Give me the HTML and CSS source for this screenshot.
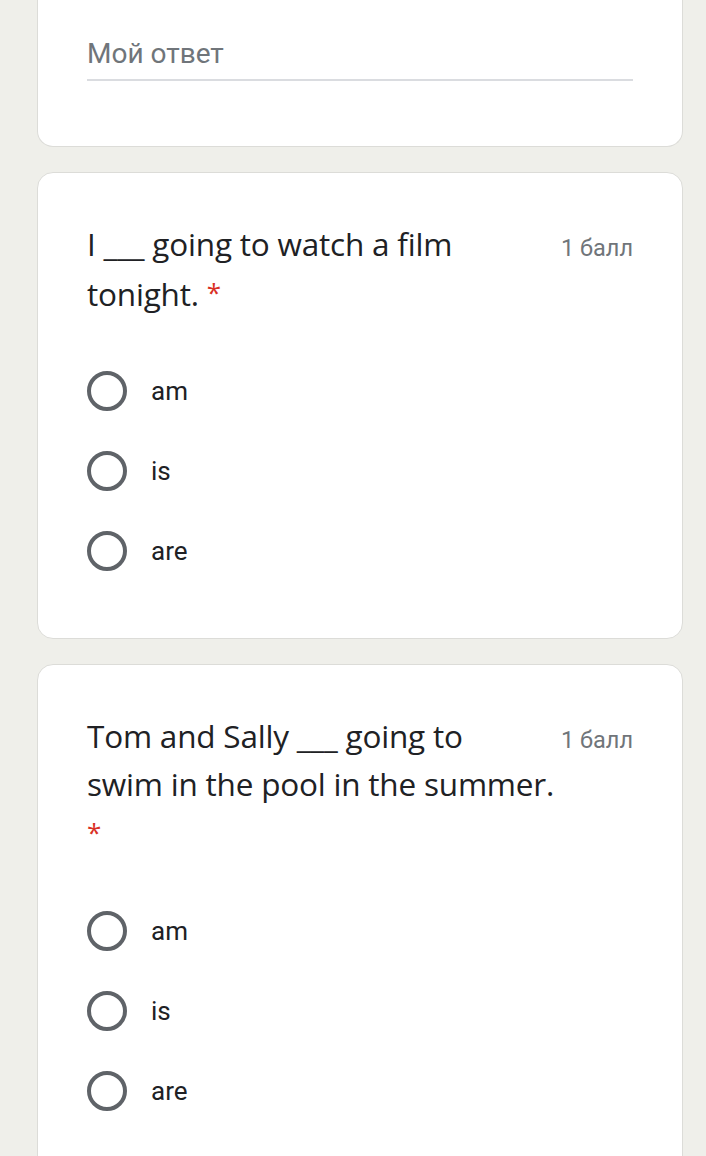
FILE: index.html
```html
<!DOCTYPE html>
<html lang="ru">
<head>
<meta charset="utf-8">
<title>Form</title>
<link rel="stylesheet" href="styles.css">
</head>
<body>
<div class="page">
  <div class="card card-top">
    <div class="answer">
      <div class="answer-text">Мой ответ</div>
      <div class="answer-line"></div>
    </div>
  </div>

  <div class="card">
    <div class="head">
      <div class="title">I ___ going to watch a film tonight. <span class="req">*</span></div>
      <div class="points">1 балл</div>
    </div>
    <div class="options">
      <div class="opt"><span class="radio"></span><span class="label">am</span></div>
      <div class="opt"><span class="radio"></span><span class="label">is</span></div>
      <div class="opt"><span class="radio"></span><span class="label">are</span></div>
    </div>
  </div>

  <div class="card card-last">
    <div class="head">
      <div class="title">Tom and Sally ___ going to<br>swim in the pool in the summer. <span class="req">*</span></div>
      <div class="points">1 балл</div>
    </div>
    <div class="options">
      <div class="opt"><span class="radio"></span><span class="label">am</span></div>
      <div class="opt"><span class="radio"></span><span class="label">is</span></div>
      <div class="opt"><span class="radio"></span><span class="label">are</span></div>
    </div>
  </div>
</div>
</body>
</html>
```

FILE: styles.css
```css
html, body {
  margin: 0;
  padding: 0;
  background: #efefea;
  height: 100%;
  overflow: hidden;
}
body {
  font-family: Roboto, "Liberation Sans", sans-serif;
  color: #202124;
}
.page {
  display: flex;
  flex-direction: column;
  gap: 25px;
  padding-left: 37px;
  width: 646px;
}
.card {
  background: #fff;
  border: 1px solid #dcdcd8;
  border-radius: 16px;
  padding: 47px 49px 47px 49px;
  box-sizing: border-box;
}
.card-top {
  border-top: none;
  border-top-left-radius: 0;
  border-top-right-radius: 0;
  padding-top: 34px;
  padding-bottom: 65px;
}
.answer-text {
  font-size: 28px;
  line-height: 40px;
  color: #70757a;
}
.answer-line {
  margin-top: 5px;
  height: 2px;
  background: #dadce0;
}
.head {
  display: flex;
  align-items: flex-start;
}
.title {
  flex: none;
  width: 470px;
  font-family: "Open Sans", sans-serif;
  font-size: 31.5px;
  letter-spacing: -0.2px;
  line-height: 48px;
  color: #202124;
}
.req {
  color: #d93025;
  font-size: 26px;
  letter-spacing: 0;
  vertical-align: 4px;
}
.points {
  flex: none;
  margin-left: auto;
  font-size: 23.5px;
  line-height: 56px;
  color: #70757a;
  white-space: nowrap;
}
.options {
  margin-top: 33px;
  display: flex;
  flex-direction: column;
}
.opt {
  display: flex;
  align-items: center;
  height: 80px;
}
.radio {
  width: 40px;
  height: 40px;
  box-sizing: border-box;
  border: 4px solid #5f6368;
  border-radius: 50%;
  flex: none;
}
.label {
  margin-left: 24px;
  font-size: 26px;
  color: #202124;
}
```
